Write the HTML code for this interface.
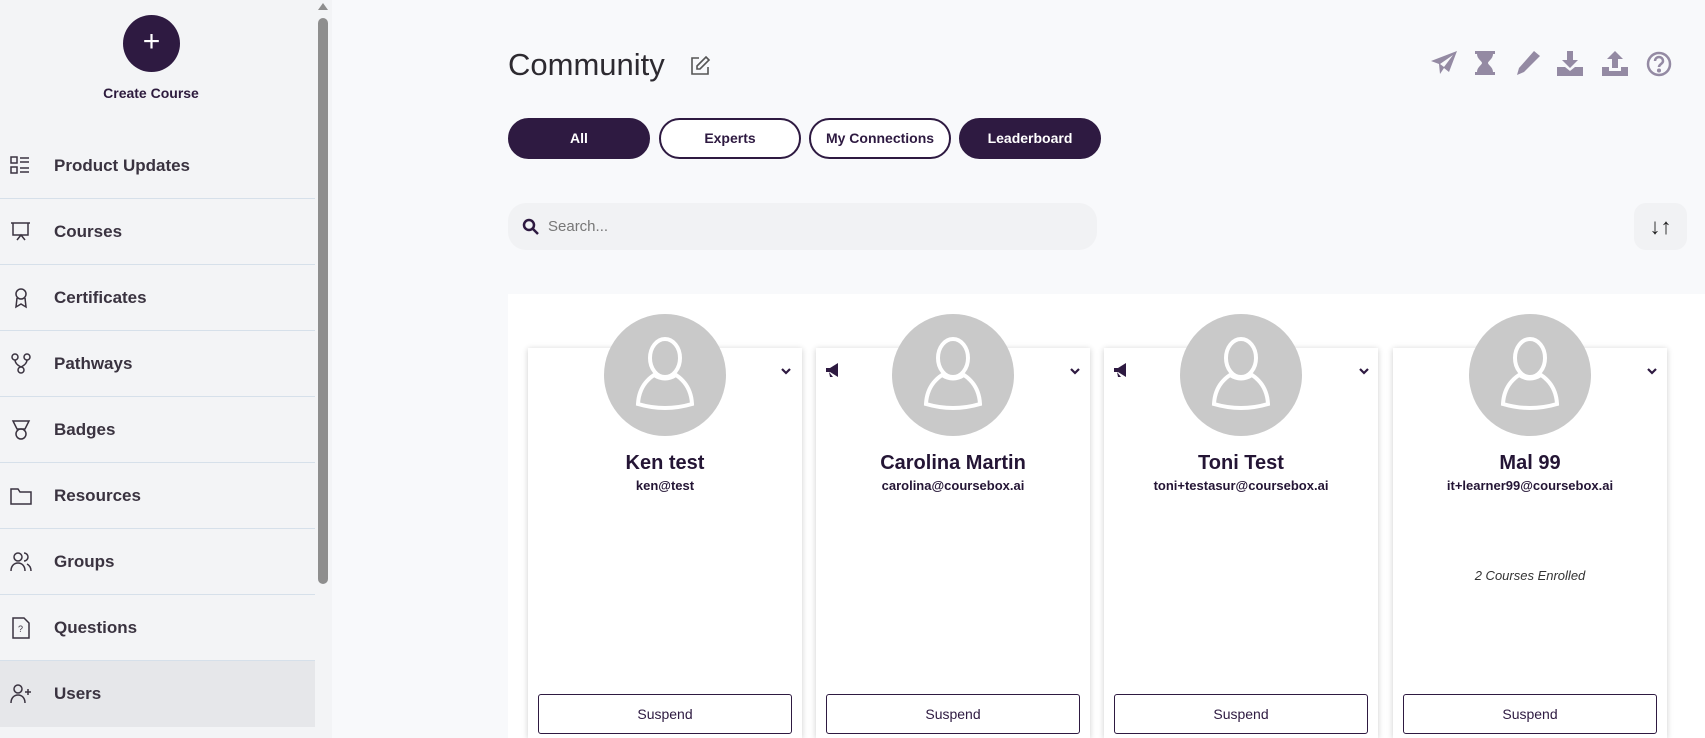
<!DOCTYPE html>
<html style="overflow:hidden;height:738px"><head><meta charset="utf-8"><style>
*{box-sizing:border-box;margin:0;padding:0}
html,body{overflow:hidden}
body{width:1705px;height:738px;overflow:hidden;background:#f8f9fb;font-family:"Liberation Sans",sans-serif;color:#2d1b3d;position:relative}
.side{position:absolute;left:0;top:0;width:315px;height:738px;background:#f3f4f6}
.sb{position:absolute;left:315px;top:0;width:17px;height:738px;background:#f3f4f6}
.sb .thumb{position:absolute;left:3px;top:18px;width:10px;height:566px;background:#8e8e8e;border-radius:5px}
.sb .up{position:absolute;left:3px;top:3px;width:0;height:0;border-left:5px solid transparent;border-right:5px solid transparent;border-bottom:7px solid #8e8e8e}
.cc{position:absolute;left:123px;top:15px;width:57px;height:57px;border-radius:50%;background:#2e1a41;color:#fff;font-size:30px;text-align:center;line-height:54px;font-weight:300}
.cct{position:absolute;left:0;width:302px;top:85px;text-align:center;font-size:14px;font-weight:bold;color:#2d1b3d}
.item{position:absolute;left:0;width:315px;height:66px;border-bottom:1px solid #d6e0ea;display:flex;align-items:center}
.item svg{position:absolute;left:10px;width:22px;height:22px}
.item span{position:absolute;left:54px;font-size:17px;font-weight:bold;color:#3a3340}
h1{position:absolute;left:508px;top:47px;font-size:31px;font-weight:normal;color:#2d2a30}
.btn{position:absolute;top:118px;height:41px;width:142px;border-radius:21px;border:2px solid #2e1a41;font-size:14px;font-weight:bold;text-align:center;line-height:37px;background:#fff;color:#2e1a41}
.btn.d{background:#2e1a41;color:#fff}
.search{position:absolute;left:508px;top:203px;width:589px;height:47px;border-radius:18px;background:#f1f2f4;font-size:15px;color:#777;line-height:47px;padding-left:40px}
.sort{position:absolute;left:1634px;top:203px;width:53px;height:47px;border-radius:12px;background:#f1f2f4;text-align:center;line-height:47px;font-size:22px;color:#222}
.panel{position:absolute;left:508px;top:294px;width:1197px;height:444px;background:#fff}
.card{position:absolute;top:348px;width:274px;height:390px;background:#fff;box-shadow:0 1px 6px rgba(0,0,0,.2)}
.av{position:absolute;top:-34px;left:76px;width:122px;height:122px;border-radius:50%;background:#c9c9c9}
.nm{position:absolute;top:104px;width:100%;text-align:center;font-size:20px;font-weight:bold;color:#241535}
.em{position:absolute;top:130px;width:100%;text-align:center;font-size:13px;font-weight:bold;color:#241535}
.en{position:absolute;top:220px;width:100%;text-align:center;font-size:13px;font-style:italic;color:#333}
.sus{position:absolute;left:10px;top:346px;width:254px;height:40px;border:1px solid #2e1a41;border-radius:3px;text-align:center;line-height:38px;font-size:14px;color:#2e1a41}
.ti{position:absolute;top:51px}
</style></head><body>
<div class="side">
<div class="cc">+</div>
<div class="cct">Create Course</div>
<div class="item" style="top:133px"><svg viewBox="0 0 22 22" fill="none" stroke="#3a3340" stroke-width="1.5"><rect x="1" y="2" width="6" height="6"/><rect x="1" y="12" width="6" height="6"/><path d="M10 3h9M10 7h9M10 13h9M10 17h9"/></svg><span>Product Updates</span></div>
<div class="item" style="top:199px"><svg viewBox="0 0 22 22" fill="none" stroke="#3a3340" stroke-width="1.5"><path d="M1 2h19M3 2v12h15V2M7 19l4-5 4 5"/></svg><span>Courses</span></div>
<div class="item" style="top:265px"><svg viewBox="0 0 22 22" fill="none" stroke="#3a3340" stroke-width="1.5"><circle cx="11" cy="7" r="5"/><path d="M7 11l-1 9 5-3 5 3-1-9"/></svg><span>Certificates</span></div>
<div class="item" style="top:331px"><svg viewBox="0 0 22 22" fill="none" stroke="#3a3340" stroke-width="1.5"><circle cx="5" cy="4" r="3"/><circle cx="17" cy="4" r="3"/><circle cx="11" cy="17" r="3"/><path d="M5 7q0 4 6 7M17 7q0 4-6 7"/></svg><span>Pathways</span></div>
<div class="item" style="top:397px"><svg viewBox="0 0 22 22" fill="none" stroke="#3a3340" stroke-width="1.5"><path d="M3 2h16l-4 8H7z"/><circle cx="11" cy="15" r="5"/></svg><span>Badges</span></div>
<div class="item" style="top:463px"><svg viewBox="0 0 22 22" fill="none" stroke="#3a3340" stroke-width="1.5"><path d="M1 4h7l2 3h11v12H1z"/></svg><span>Resources</span></div>
<div class="item" style="top:529px"><svg viewBox="0 0 22 22" fill="none" stroke="#3a3340" stroke-width="1.5"><circle cx="8" cy="6" r="4"/><path d="M1 20c0-5 3-8 7-8s7 3 7 8M14 2a4 4 0 010 8M17 13c2 1 4 3 4 7"/></svg><span>Groups</span></div>
<div class="item" style="top:595px"><svg viewBox="0 0 22 22" fill="none" stroke="#3a3340" stroke-width="1.5"><path d="M3 1h11l5 5v15H3z"/><text x="8" y="15" font-size="9" fill="#3a3340" stroke="none">?</text></svg><span>Questions</span></div>
<div class="item" style="top:661px;background:#e6e7ea;border:none"><svg viewBox="0 0 22 22" fill="none" stroke="#3a3340" stroke-width="1.5"><circle cx="8" cy="6" r="4"/><path d="M1 20c0-5 3-8 7-8s7 3 7 8M18 6v6M15 9h6"/></svg><span>Users</span></div>
</div>
<div class="sb"><div class="up"></div><div class="thumb"></div></div>

<h1>Community</h1>
<svg style="position:absolute;left:689px;top:55px" width="22" height="22" viewBox="0 0 22 22" fill="none" stroke="#555" stroke-width="1.6"><path d="M10 3H3v16h16v-7"/><path d="M17 2l3 3-9 9H8v-3z"/></svg>

<svg class="ti" style="left:1431px" width="26" height="24" viewBox="0 0 26 24" fill="#948aa3"><path d="M26 0L0 10l8 3 1 10 4-6 5 4zM9 13l13-9-9 12z"/></svg>
<svg class="ti" style="left:1475px" width="20" height="24" viewBox="0 0 20 24" fill="#948aa3"><path d="M0 0h20v3h-2c0 5-5 7-5 9s5 4 5 9h2v3H0v-3h2c0-5 5-7 5-9S2 8 2 3H0z"/></svg>
<svg class="ti" style="left:1513px" width="27" height="25" viewBox="0 0 27 25" fill="#948aa3"><path d="M21 0l6 5-16 16-7 3 2-7z"/></svg>
<svg class="ti" style="left:1557px" width="26" height="25" viewBox="0 0 26 25" fill="#948aa3"><path d="M10 0h6v9h5l-8 8-8-8h5zM0 16h8l5 4 5-4h8v9H0z"/></svg>
<svg class="ti" style="left:1602px" width="26" height="25" viewBox="0 0 26 25" fill="#948aa3"><path d="M13 0l8 8h-5v9h-6V8H5zM0 16h7v4h12v-4h7v9H0z"/></svg>
<svg class="ti" style="left:1646px" width="26" height="26" viewBox="0 0 26 26" fill="none" stroke="#948aa3" stroke-width="2.5"><circle cx="13" cy="13" r="11"/><path d="M9 10a4 4 0 118 0c0 3-4 3-4 6"/><circle cx="13" cy="19.5" r=".8" fill="#948aa3"/></svg>

<div class="btn d" style="left:508px">All</div>
<div class="btn" style="left:659px">Experts</div>
<div class="btn" style="left:809px">My Connections</div>
<div class="btn d" style="left:959px">Leaderboard</div>

<div class="search">Search...</div>
<svg style="position:absolute;left:522px;top:218px" width="17" height="17" viewBox="0 0 17 17" fill="none" stroke="#2e1a41" stroke-width="2.5"><circle cx="7" cy="7" r="5"/><path d="M11 11l5 5"/></svg>
<div class="sort">↓↑</div>

<div class="panel"></div>
<div class="card" style="left:528px"><div class="av"></div><div class="nm">Ken test</div><div class="em">ken@test</div><div class="sus">Suspend</div></div>
<div class="card" style="left:816px"><div class="av"></div><div class="nm">Carolina Martin</div><div class="em">carolina@coursebox.ai</div><div class="sus">Suspend</div></div>
<div class="card" style="left:1104px"><div class="av"></div><div class="nm">Toni Test</div><div class="em">toni+testasur@coursebox.ai</div><div class="sus">Suspend</div></div>
<div class="card" style="left:1393px"><div class="av"></div><div class="nm">Mal 99</div><div class="em">it+learner99@coursebox.ai</div><div class="en">2 Courses Enrolled</div><div class="sus">Suspend</div></div>

<svg style="position:absolute;left:0;top:0;pointer-events:none" width="1705" height="738">
<defs><g id="u" fill="none" stroke="#fff" stroke-width="4"><ellipse cx="0" cy="-20" rx="15" ry="19"/><path d="M-11 -3q-15 10-16 29q27 8 54 0q-1-19-16-29q-11 7-22 0z"/></g>
<path id="c" d="M-4 -2l4 4 4-4" fill="none" stroke="#2e1a41" stroke-width="2.2"/>
<path id="m" d="M0 3h4l8-5v14l-8-5H0zM3 7l1 5h3" fill="#2e1a41"/></defs>
<use href="#u" x="665" y="378"/><use href="#u" x="953" y="378"/><use href="#u" x="1241" y="378"/><use href="#u" x="1530" y="378"/>
<use href="#c" x="786" y="371"/><use href="#c" x="1075" y="371"/><use href="#c" x="1364" y="371"/><use href="#c" x="1652" y="371"/>
<use href="#m" x="826" y="365"/><use href="#m" x="1114" y="365"/>
</svg>
</body></html>
